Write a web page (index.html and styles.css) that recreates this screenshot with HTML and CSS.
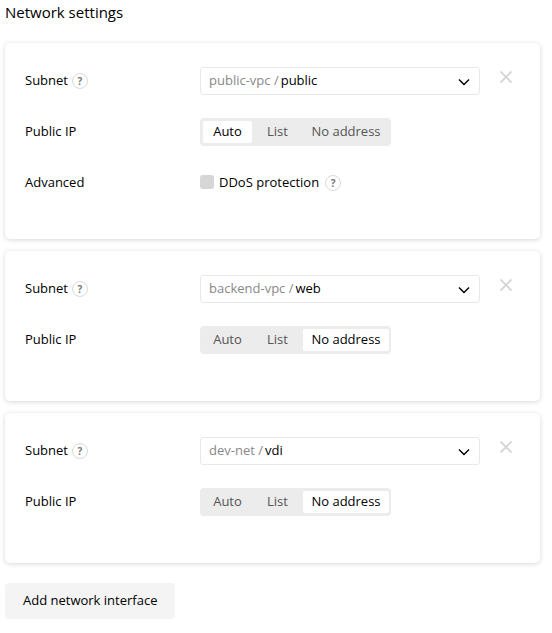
FILE: index.html
```
<!DOCTYPE html>
<html lang="en">

<head>
    <meta charset="utf-8">
    <title>Network settings</title>
    <link rel="stylesheet" href="styles.css">
</head>

<body>
    <h2>Network settings</h2>

    <section class="card">
        <div class="row">
            <div class="name">
                <label for="subnet1">Subnet</label>
                <button class="help" type="button" aria-label="Subnet help">?</button>
            </div>
            <div class="select">
                <span class="network">public-vpc /</span>
                <select id="subnet1">
                    <option>public</option>
                </select>
                <svg class="arrow" viewBox="0 0 12 8"><path d="M1 1.5l5 5 5-5" /></svg>
            </div>
            <button class="close" type="button" aria-label="Remove">
                <svg viewBox="0 0 12 12"><path d="M.5.5l11 11M11.5.5l-11 11" /></svg>
            </button>
        </div>
        <div class="row">
            <div class="name"><span id="ip1">Public IP</span></div>
            <div class="switch" role="radiogroup" aria-labelledby="ip1">
                <label><input type="radio" name="ip1" checked><span>Auto</span></label>
                <label><input type="radio" name="ip1"><span>List</span></label>
                <label><input type="radio" name="ip1"><span>No address</span></label>
            </div>
        </div>
        <div class="row advanced">
            <div class="name"><span>Advanced</span></div>
            <div class="option">
                <input type="checkbox" id="ddos">
                <label for="ddos">DDoS protection</label>
                <button class="help" type="button" aria-label="DDoS protection help">?</button>
            </div>
        </div>
    </section>

    <section class="card">
        <div class="row">
            <div class="name">
                <label for="subnet2">Subnet</label>
                <button class="help" type="button" aria-label="Subnet help">?</button>
            </div>
            <div class="select">
                <span class="network">backend-vpc /</span>
                <select id="subnet2">
                    <option>web</option>
                </select>
                <svg class="arrow" viewBox="0 0 12 8"><path d="M1 1.5l5 5 5-5" /></svg>
            </div>
            <button class="close" type="button" aria-label="Remove">
                <svg viewBox="0 0 12 12"><path d="M.5.5l11 11M11.5.5l-11 11" /></svg>
            </button>
        </div>
        <div class="row">
            <div class="name"><span id="ip2">Public IP</span></div>
            <div class="switch" role="radiogroup" aria-labelledby="ip2">
                <label><input type="radio" name="ip2"><span>Auto</span></label>
                <label><input type="radio" name="ip2"><span>List</span></label>
                <label><input type="radio" name="ip2" checked><span>No address</span></label>
            </div>
        </div>
    </section>

    <section class="card">
        <div class="row">
            <div class="name">
                <label for="subnet3">Subnet</label>
                <button class="help" type="button" aria-label="Subnet help">?</button>
            </div>
            <div class="select">
                <span class="network">dev-net /</span>
                <select id="subnet3">
                    <option>vdi</option>
                </select>
                <svg class="arrow" viewBox="0 0 12 8"><path d="M1 1.5l5 5 5-5" /></svg>
            </div>
            <button class="close" type="button" aria-label="Remove">
                <svg viewBox="0 0 12 12"><path d="M.5.5l11 11M11.5.5l-11 11" /></svg>
            </button>
        </div>
        <div class="row">
            <div class="name"><span id="ip3">Public IP</span></div>
            <div class="switch" role="radiogroup" aria-labelledby="ip3">
                <label><input type="radio" name="ip3"><span>Auto</span></label>
                <label><input type="radio" name="ip3"><span>List</span></label>
                <label><input type="radio" name="ip3" checked><span>No address</span></label>
            </div>
        </div>
    </section>

    <button class="add" type="button">Add network interface</button>
</body>

</html>
```
FILE: styles.css
```
* {
    box-sizing: border-box;
}

body {
    margin: 0;
    padding: 2px 12px 14px 5px;
    background: #fff;
    color: #000;
    font: 13px/20px "Open Sans", "Noto Sans", sans-serif;
}

h2 {
    margin: 0 0 21px;
    font-size: 15px;
    font-weight: 400;
}

button,
select {
    font: inherit;
    color: inherit;
    border: 0;
    padding: 0;
    margin: 0;
    background: none;
    cursor: pointer;
}

.card {
    padding: 24px 28px 24px 20px;
    margin-bottom: 12px;
    border-radius: 5px;
    box-shadow: 0 1px 5px rgba(0, 0, 0, 0.16);
}

.row {
    display: grid;
    grid-template-columns: 175px 1fr 12px;
    min-height: 28px;
    margin-bottom: 23px;
}

.row.advanced {
    margin-bottom: 18px;
}

.name {
    display: flex;
    align-items: center;
    height: 28px;
    gap: 4px;
}

.name label,
.name span,
.option label {
    padding-bottom: 2px;
}

.help {
    width: 16px;
    height: 16px;
    border: 1px solid #d9d9d9;
    border-radius: 50%;
    color: #777;
    font-size: 10px;
    font-weight: 700;
    line-height: 14px;
    text-align: center;
}

.select {
    position: relative;
    display: flex;
    align-items: center;
    height: 28px;
    margin-right: 20px;
    padding: 0 0 2px 8px;
    border: 1px solid #e8e8e8;
    border-radius: 3px;
}

.network {
    color: #888;
    white-space: nowrap;
}

.select select {
    flex: 1;
    min-width: 0;
    height: 24px;
    padding: 0 32px 0 2px;
    appearance: none;
}

.arrow {
    position: absolute;
    right: 9px;
    top: 10px;
    width: 12px;
    height: 8px;
    pointer-events: none;
}

.arrow path {
    fill: none;
    stroke: #000;
    stroke-width: 1.4;
}

.close {
    height: 20px;
    line-height: 0;
}

.close svg {
    width: 12px;
    height: 12px;
}

.close path {
    stroke: #d4d4d4;
    stroke-width: 1.8;
}

.switch {
    display: grid;
    grid-template-columns: 49px 41px 86px;
    justify-self: start;
    gap: 5px;
    height: 28px;
    padding: 3px 2px 3px 3px;
    border-radius: 4px;
    background: #ececec;
}

.switch label {
    position: relative;
    cursor: pointer;
}

.switch input {
    position: absolute;
    inset: 0;
    margin: 0;
    opacity: 0;
}

.switch span {
    display: block;
    height: 22px;
    border-radius: 2px;
    color: #555;
    line-height: 21px;
    text-align: center;
    white-space: nowrap;
}

.switch input:checked + span {
    background: #fff;
    color: #000;
}

.option {
    display: flex;
    align-items: center;
    height: 28px;
}

.option input {
    appearance: none;
    width: 14px;
    height: 14px;
    margin: 0 5px 2px 0;
    border-radius: 3px;
    background: #d6d6d6;
}

.option input:checked {
    background: #555;
}

.option .help {
    margin-left: 6px;
}

.add {
    height: 36px;
    margin-top: 8px;
    padding: 0 18px 2px;
    border-radius: 4px;
    background: #f4f4f4;
}
```
